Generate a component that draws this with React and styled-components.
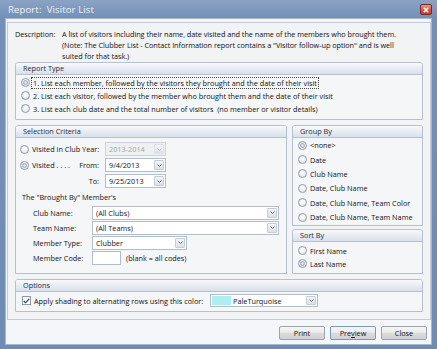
import styled, { createGlobalStyle } from 'styled-components';

const GlobalStyle = createGlobalStyle`
  html, body { margin: 0; padding: 0; background: #6f8cb4; }
  body { font-family: "Open Sans", "Noto Sans", sans-serif; }
`;

const Window = styled.div`
  width: 437px;
  height: 349px;
  box-sizing: border-box;
  display: flex;
  flex-direction: column;
  padding: 0 5px 4px 5px;
  background: linear-gradient(#8aa3c5 0px, #7490b7 18px, #6f8cb4 100%);
  font-size: 7.3px;
  color: #111;
`;

const TitleBar = styled.div`
  height: 18px;
  display: flex;
  align-items: center;
  justify-content: space-between;
  padding-left: 3px;
`;

const Title = styled.span`
  font-size: 9.6px;
  color: #eef2f8;
  letter-spacing: 0.1px;
`;

const CloseBtn = styled.span`
  width: 12px;
  height: 11px;
  box-sizing: border-box;
  margin-top: 1px;
  border: 1px solid #7a2a22;
  border-radius: 2px;
  background: linear-gradient(#e99a8a, #d15a45 50%, #c23b28);
  display: flex;
  align-items: center;
  justify-content: center;
`;

const Client = styled.div`
  flex: 1;
  display: flex;
  flex-direction: column;
  background: #f4f6f9;
  border: 1px solid #a7b7cc;
  padding: 3px 0 0 1px;
`;

const Panel = styled.div`
  width: 424px;
  box-sizing: border-box;
  border: 1px solid #c2cbd7;
  background: #f1f3f5;
  padding: 6px 7px 7px 7px;
  display: flex;
  flex-direction: column;
`;

const Description = styled.div`
  display: grid;
  grid-template-columns: 47px 1fr;
  line-height: 11px;
  letter-spacing: -0.05px;
`;

const Group = styled.section`
  border: 1px solid #b7c1ce;
  border-radius: 3px 3px 0 0;
  background: #f5f6f8;
  display: flex;
  flex-direction: column;
  margin-top: ${p => p.$mt || 0}px;
  flex: ${p => (p.$grow ? 1 : 'none')};
`;

const GroupHeader = styled.div`
  height: 11px;
  line-height: 11px;
  padding-left: 7px;
  background: linear-gradient(#f8f9fb, #d9e0e9);
  border-bottom: 1px solid #b7c1ce;
  border-radius: 2px 2px 0 0;
  color: #1f2b3a;
`;

const GroupBody = styled.div`
  display: flex;
  flex-direction: column;
  padding: ${p => p.$pad};
`;

const OptionRow = styled.div`
  height: ${p => p.$h}px;
  display: flex;
  align-items: center;
  gap: 3px;
  white-space: nowrap;
`;

const Radio = styled.span`
  width: 9px;
  height: 9px;
  box-sizing: border-box;
  border-radius: 50%;
  border: 1px solid #8e9bac;
  background: radial-gradient(circle at 50% 35%, #ffffff, #dfe3e9);
  flex: none;
  display: inline-flex;
  align-items: center;
  justify-content: center;
  &::after {
    content: '';
    display: ${p => (p.$checked ? 'block' : 'none')};
    width: 5px;
    height: 5px;
    box-sizing: border-box;
    border-radius: 50%;
    border: 1px solid #a3adba;
    background: radial-gradient(circle, #e4e8ed 30%, #b8c0cb);
  }
`;

const Focus = styled.span`
  outline: 1px dotted #444;
  outline-offset: 0px;
  padding: 0 1px;
  margin-left: -1px;
`;

const Columns = styled.div`
  display: grid;
  grid-template-columns: 272px 131px;
  gap: 5px;
  margin-top: 5px;
`;

const SideColumn = styled.div`
  display: flex;
  flex-direction: column;
  gap: 3px;
`;

const DateRow = styled.div`
  height: 16px;
  display: grid;
  grid-template-columns: 85px 61px;
  align-items: center;
`;

const DateLabel = styled.div`
  display: flex;
  align-items: center;
  gap: 3px;
  white-space: nowrap;
`;

const RightLabel = styled.span`
  margin-left: auto;
  padding-right: ${p => p.$pr}px;
`;

const Caption = styled.div`
  height: 16px;
  display: flex;
  align-items: center;
  padding-left: 2px;
`;

const FieldRow = styled.div`
  height: 15px;
  display: grid;
  grid-template-columns: 59px auto 1fr;
  align-items: center;
  padding-left: 13px;
  white-space: nowrap;
`;

const Combo = styled.div`
  width: ${p => p.$w}px;
  height: ${p => p.$h || 14}px;
  box-sizing: border-box;
  border: 1px solid ${p => (p.$disabled ? '#cdd3db' : '#b3bdca')};
  background: ${p => (p.$disabled ? '#eef0f2' : '#ffffff')};
  color: ${p => (p.$disabled ? '#a2a8b0' : '#111')};
  display: flex;
  align-items: center;
  padding-left: ${p => (p.$swatch ? 0 : 3)}px;
`;

const ComboText = styled.span`
  flex: 1;
  white-space: nowrap;
  overflow: hidden;
`;

const ArrowBtn = styled.span`
  width: 10px;
  align-self: stretch;
  margin: 1px;
  box-sizing: border-box;
  border: 1px solid ${p => (p.$disabled ? '#dde1e6' : '#c5ccd6')};
  border-radius: 1px;
  background: linear-gradient(#f4f5f7, #dde1e7);
  display: flex;
  align-items: center;
  justify-content: center;
`;

const Swatch = styled.span`
  width: 19px;
  align-self: stretch;
  margin: 1px 2px 1px 1px;
  background: #afeeee;
`;

const TextBox = styled.div`
  width: 29px;
  height: 14px;
  box-sizing: border-box;
  border: 1px solid #b3bdca;
  background: #fff;
`;

const Hint = styled.span`
  padding-left: 5px;
`;

const CheckRow = styled.div`
  height: 13px;
  display: flex;
  align-items: center;
  white-space: nowrap;
`;

const CheckBox = styled.span`
  width: 9px;
  height: 9px;
  box-sizing: border-box;
  border: 1px solid #8e9bac;
  background: linear-gradient(#f0f2f4, #ffffff);
  display: flex;
  align-items: center;
  justify-content: center;
  flex: none;
`;

const CheckLabel = styled.span`
  width: 176px;
  padding-left: 3px;
`;

const ButtonRow = styled.div`
  display: flex;
  justify-content: flex-end;
  gap: 5px;
  margin-top: 6px;
  padding-right: 4px;
`;

const Button = styled.button`
  width: 46px;
  height: 14px;
  box-sizing: border-box;
  padding: 0;
  border: 1px solid ${p => (p.$default ? '#7c98b8' : '#9aa3ae')};
  border-radius: 2px;
  background: linear-gradient(#f6f6f6, #ebebeb 45%, #dcdcdc 50%, #cfd1d4);
  font-family: inherit;
  font-size: 7.3px;
  color: #111;
  line-height: 12px;
`;

const Chevron = ({ disabled }) => (
  <svg width="5" height="3" viewBox="0 0 5 3">
    <path d="M0.5 0.5 L2.5 2.5 L4.5 0.5" fill="none" stroke={disabled ? '#b8bec6' : '#4b586a'} strokeWidth="0.9" />
  </svg>
);

const Select = ({ w, h, value, disabled, swatch }) => (
  <Combo $w={w} $h={h} $disabled={disabled} $swatch={swatch}>
    {swatch && <Swatch />}
    <ComboText>{value}</ComboText>
    <ArrowBtn $disabled={disabled}>
      <Chevron disabled={disabled} />
    </ArrowBtn>
  </Combo>
);

const groupByItems = ['<none>', 'Date', 'Club Name', 'Date, Club Name', 'Date, Club Name, Team Color', 'Date, Club Name, Team Name'];

export default function App() {
  return (
    <>
      <GlobalStyle />
      <Window>
        <TitleBar>
          <Title>Report:&nbsp; Visitor List</Title>
          <CloseBtn>
            <svg width="6" height="6" viewBox="0 0 6 6">
              <path d="M0.8 0.8 L5.2 5.2 M5.2 0.8 L0.8 5.2" stroke="#fff" strokeWidth="1.4" />
            </svg>
          </CloseBtn>
        </TitleBar>
        <Client>
          <Panel>
            <Description>
              <span>Description:</span>
              <span>
                A list of visitors including their name, date visited and the name of the members who brought them.
                <br />
                (Note: The Clubber List - Contact Information report contains a "Visitor follow-up option" and is well
                <br />
                suited for that task.)
              </span>
            </Description>

            <Group>
              <GroupHeader>Report Type</GroupHeader>
              <GroupBody $pad="1px 0 4px 5px">
                <OptionRow $h={13}>
                  <Radio $checked />
                  <Focus>1. List each member, followed by the visitors they brought and the date of their visit</Focus>
                </OptionRow>
                <OptionRow $h={13}>
                  <Radio />
                  <span>2. List each visitor, followed by the member who brought them and the date of their visit</span>
                </OptionRow>
                <OptionRow $h={13}>
                  <Radio />
                  <span>3. List each club date and the total number of visitors&nbsp; (no member or visitor details)</span>
                </OptionRow>
              </GroupBody>
            </Group>

            <Columns>
              <Group>
                <GroupHeader>Selection Criteria</GroupHeader>
                <GroupBody $pad="3px 0 8px 4px">
                  <DateRow>
                    <DateLabel>
                      <Radio />
                      <span>Visited in Club Year:</span>
                    </DateLabel>
                    <Select w={61} value="2013-2014" disabled />
                  </DateRow>
                  <DateRow>
                    <DateLabel>
                      <Radio $checked />
                      <span>Visited . . . .</span>
                      <RightLabel $pr={6}>From:</RightLabel>
                    </DateLabel>
                    <Select w={61} value="9/4/2013" />
                  </DateRow>
                  <DateRow>
                    <DateLabel>
                      <RightLabel $pr={6}>To:</RightLabel>
                    </DateLabel>
                    <Select w={61} value="9/25/2013" />
                  </DateRow>
                  <Caption>The "Brought By" Member's</Caption>
                  <FieldRow>
                    <span>Club Name:</span>
                    <Select w={187} value="(All Clubs)" />
                  </FieldRow>
                  <FieldRow>
                    <span>Team Name:</span>
                    <Select w={187} value="(All Teams)" />
                  </FieldRow>
                  <FieldRow>
                    <span>Member Type:</span>
                    <Select w={95} value="Clubber" />
                  </FieldRow>
                  <FieldRow>
                    <span>Member Code:</span>
                    <TextBox />
                    <Hint>(blank = all codes)</Hint>
                  </FieldRow>
                </GroupBody>
              </Group>

              <SideColumn>
                <Group>
                  <GroupHeader>Group By</GroupHeader>
                  <GroupBody $pad="0 0 1px 5px">
                    {groupByItems.map((item, i) => (
                      <OptionRow key={item} $h={14.4}>
                        <Radio $checked={i === 0} />
                        <span>{item}</span>
                      </OptionRow>
                    ))}
                  </GroupBody>
                </Group>
                <Group $grow>
                  <GroupHeader>Sort By</GroupHeader>
                  <GroupBody $pad="2px 0 2px 5px">
                    <OptionRow $h={13}>
                      <Radio />
                      <span>First Name</span>
                    </OptionRow>
                    <OptionRow $h={13}>
                      <Radio $checked />
                      <span>Last Name</span>
                    </OptionRow>
                  </GroupBody>
                </Group>
              </SideColumn>
            </Columns>

            <Group $mt={5}>
              <GroupHeader>Options</GroupHeader>
              <GroupBody $pad="2px 0 4px 6px">
                <CheckRow>
                  <CheckBox>
                    <svg width="7" height="6" viewBox="0 0 7 6">
                      <path d="M0.8 3 L2.6 4.8 L6.2 0.8" fill="none" stroke="#2b3440" strokeWidth="1.1" />
                    </svg>
                  </CheckBox>
                  <CheckLabel>Apply shading to alternating rows using this color:</CheckLabel>
                  <Select w={108} h={13} value="PaleTurquoise" swatch />
                </CheckRow>
              </GroupBody>
            </Group>
          </Panel>

          <ButtonRow>
            <Button>Print</Button>
            <Button $default>
              Pre<u>v</u>iew
            </Button>
            <Button>Close</Button>
          </ButtonRow>
        </Client>
      </Window>
    </>
  );
}
